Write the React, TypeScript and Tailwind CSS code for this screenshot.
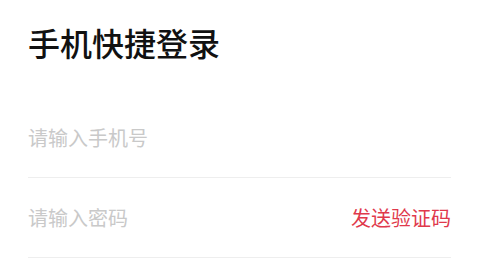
export default function App() {
  return (
    <div
      className="w-[480px] h-[274px] bg-white overflow-hidden pl-[28px] pr-[29px] pt-[21px]"
      style={{ fontFamily: '"Noto Sans CJK SC", "Noto Sans", sans-serif' }}
    >
      <h1 className="text-[32px] leading-[42px] font-medium text-[#111111]">手机快捷登录</h1>
      <div className="mt-[35px]">
        <div className="h-[80px] flex items-center border-b border-[#eeeeee]">
          <input
            className="flex-1 text-[20px] outline-none bg-transparent placeholder:text-[#c9c9c9]"
            placeholder="请输入手机号"
          />
        </div>
        <div className="h-[80px] flex items-center border-b border-[#eeeeee]">
          <input
            type="password"
            className="flex-1 min-w-0 text-[20px] outline-none bg-transparent placeholder:text-[#c9c9c9]"
            placeholder="请输入密码"
          />
          <button className="text-[20px] text-[#e0394c] shrink-0">发送验证码</button>
        </div>
      </div>
    </div>
  );
}
